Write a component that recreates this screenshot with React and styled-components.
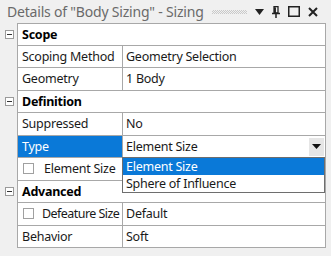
import React from 'react'
import styled, { createGlobalStyle } from 'styled-components'

const Global = createGlobalStyle`
  html, body {
    margin: 0;
    padding: 0;
    background: #f0f0f0;
  }
  body {
    font-family: "Noto Sans", "Open Sans", sans-serif;
  }
`

const Panel = styled.div`
  width: 331px;
  height: 256px;
  background: #f0f0f0;
  display: flex;
  flex-direction: column;
  overflow: hidden;
`

const TitleBar = styled.div`
  height: 23px;
  display: flex;
  align-items: center;
  padding: 0 0 0 7px;
  color: #6a6a6a;
  font-size: 14px;
  white-space: nowrap;
`

const TitleText = styled.span`
  letter-spacing: -0.2px;
`

const Grip = styled.div`
  flex: 1;
  height: 4px;
  margin: 0 8px 0 8px;
  background: repeating-conic-gradient(#c9c9c9 0 25%, transparent 0 50%) 0 0 / 2px 2px;
`

const TitleIcons = styled.div`
  display: flex;
  align-items: center;
  gap: 8px;
  padding-right: 13px;
`

const Tree = styled.div`
  display: flex;
  flex-direction: column;
`

const Line = styled.div`
  display: flex;
  height: 22.5px;
`

const Gutter = styled.div`
  width: 17px;
  display: flex;
  align-items: center;
  justify-content: flex-start;
  padding-left: 5px;
  box-sizing: border-box;
`

const Toggle = styled.div`
  width: 9px;
  height: 9px;
  box-sizing: border-box;
  border: 1px solid #9a9a9a;
  background: #fff;
  position: relative;
  &::after {
    content: '';
    position: absolute;
    left: 1px;
    right: 1px;
    top: 3px;
    height: 1px;
    background: #333;
  }
`

const Rows = styled.div`
  width: 309px;
  display: flex;
  border-left: 1px solid #a8a8a8;
  border-right: 1px solid #a8a8a8;
  border-top: ${p => (p.$first ? '1px solid #a8a8a8' : 'none')};
  border-bottom: 1px solid #a8a8a8;
  box-sizing: border-box;
  background: #fff;
  font-size: 12.5px;
  letter-spacing: -0.25px;
  color: #1a1a1a;
`

const Header = styled.div`
  flex: 1;
  display: flex;
  align-items: center;
  padding-left: 4px;
  font-weight: 700;
  color: #000;
`

const Label = styled.div`
  width: 105px;
  flex: none;
  display: flex;
  align-items: center;
  padding-left: 4px;
  box-sizing: border-box;
  border-right: 1px solid #a8a8a8;
  white-space: nowrap;
  overflow: hidden;
  letter-spacing: ${p => (p.$tight ? '-0.55px' : 'inherit')};
  background: ${p => (p.$selected ? '#0a79d8' : '#fff')};
  color: ${p => (p.$selected ? '#fff' : '#1a1a1a')};
`

const Value = styled.div`
  flex: 1;
  display: flex;
  align-items: center;
  padding-left: 3px;
  position: relative;
  white-space: nowrap;
`

const Check = styled.span`
  width: 11px;
  height: 11px;
  box-sizing: border-box;
  border: 1px solid #a0a0a0;
  background: #fff;
  margin: 0 ${p => (p.$tight ? '8px' : '10px')} 0 1px;
  flex: none;
`

const DropButton = styled.div`
  position: absolute;
  right: 1px;
  top: 2px;
  bottom: 1px;
  width: 15px;
  background: #e6e6e6;
  display: flex;
  align-items: center;
  justify-content: center;
`

const List = styled.div`
  position: absolute;
  left: -1px;
  right: 0;
  top: 100%;
  z-index: 10;
  background: #fff;
  border: 1px solid #6e6e6e;
  display: flex;
  flex-direction: column;
`

const Option = styled.div`
  height: 17px;
  display: flex;
  align-items: center;
  padding-left: 3px;
  background: ${p => (p.$active ? '#0a79d8' : '#fff')};
  color: ${p => (p.$active ? '#fff' : '#1a1a1a')};
`

const rows = [
  { header: 'Scope' },
  { label: 'Scoping Method', value: 'Geometry Selection' },
  { label: 'Geometry', value: '1 Body' },
  { header: 'Definition' },
  { label: 'Suppressed', value: 'No' },
  { label: 'Type', value: 'Element Size', selected: true, dropdown: true },
  { label: 'Element Size', value: '', check: true },
  { header: 'Advanced' },
  { label: 'Defeature Size', value: 'Default', check: true, tight: true },
  { label: 'Behavior', value: 'Soft' },
]

const TitleIconSet = () => (
  <TitleIcons>
    <svg width="9" height="6" viewBox="0 0 9 6">
      <path d="M0 0 H9 L4.5 6 Z" fill="#222" />
    </svg>
    <svg width="8" height="12" viewBox="0 0 8 12">
      <path d="M2 0.5 H6 V7 H2 Z M3.3 1.5 V7" fill="none" stroke="#222" strokeWidth="1.3" />
      <path d="M0 7.5 H8 M4 7.5 V12" stroke="#222" strokeWidth="1.5" />
    </svg>
    <svg width="12" height="11" viewBox="0 0 12 11">
      <rect x="0.75" y="0.75" width="10.5" height="9.5" fill="none" stroke="#222" strokeWidth="1.5" />
    </svg>
    <svg width="10" height="10" viewBox="0 0 10 10">
      <path d="M1 1 L9 9 M9 1 L1 9" stroke="#222" strokeWidth="2" />
    </svg>
  </TitleIcons>
)

const App = () => (
  <Panel>
    <Global />
    <TitleBar>
      <TitleText>Details of "Body Sizing" - Sizing</TitleText>
      <Grip />
      <TitleIconSet />
    </TitleBar>
    <Tree>
      {rows.map((r, i) => (
        <Line key={i}>
          <Gutter>{r.header && <Toggle />}</Gutter>
          <Rows $first={i === 0}>
            {r.header ? (
              <Header>{r.header}</Header>
            ) : (
              <>
                <Label $selected={r.selected} $tight={r.tight}>
                  {r.check && <Check $tight={r.tight} />}
                  {r.label}
                </Label>
                <Value>
                  {r.value}
                  {r.dropdown && (
                    <>
                      <DropButton>
                        <svg width="9" height="5" viewBox="0 0 9 5">
                          <path d="M0 0 H9 L4.5 5 Z" fill="#111" />
                        </svg>
                      </DropButton>
                      <List>
                        <Option $active>Element Size</Option>
                        <Option>Sphere of Influence</Option>
                      </List>
                    </>
                  )}
                </Value>
              </>
            )}
          </Rows>
        </Line>
      ))}
    </Tree>
  </Panel>
)

export default App
